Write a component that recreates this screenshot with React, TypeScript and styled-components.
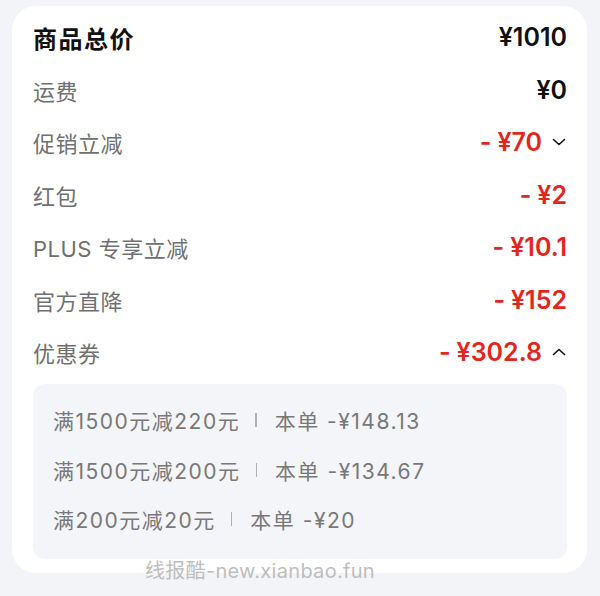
import styled, { createGlobalStyle } from 'styled-components';

const GlobalStyle = createGlobalStyle`
  html, body {
    margin: 0;
    padding: 0;
    background: #f3f4f8;
    font-family: Inter, "Noto Sans CJK SC", "Noto Sans", sans-serif;
  }
`;

const Page = styled.div`
  position: relative;
  width: 600px;
  height: 596px;
  padding: 6px 13px 0 12px;
  box-sizing: border-box;
`;

const Card = styled.div`
  background: #ffffff;
  border-radius: 24px;
  padding: 5px 20px 14px 21px;
  display: flex;
  flex-direction: column;
`;

const Row = styled.div`
  height: 52.5px;
  display: flex;
  align-items: center;
  justify-content: space-between;
`;

const Label = styled.div<{ $title?: boolean }>`
  font-size: ${({ $title }) => ($title ? '24px' : '22px')};
  font-weight: ${({ $title }) => ($title ? 700 : 400)};
  color: ${({ $title }) => ($title ? '#111111' : '#707070')};
  letter-spacing: ${({ $title }) => ($title ? '1.5px' : '0.5px')};
`;

const ValueWrap = styled.div`
  display: flex;
  align-items: center;
  gap: 9px;
`;

const Value = styled.div<{ $red?: boolean }>`
  font-size: 25px;
  font-weight: 600;
  color: ${({ $red }) => ($red ? '#e3261d' : '#111111')};
  display: flex;
  align-items: center;
`;

const Minus = styled.span`
  margin-right: 6px;
`;

const Chevron = styled.svg`
  width: 16px;
  height: 16px;
`;

const CouponBox = styled.div`
  margin-top: 5px;
  background: #f4f5f9;
  border-radius: 12px;
  padding: 12px 20px 15px 20px;
  display: flex;
  flex-direction: column;
`;

const CouponLine = styled.div`
  height: 49.5px;
  display: flex;
  align-items: center;
  font-size: 21px;
  letter-spacing: 1.5px;
  color: #787878;
`;

const Sep = styled.span`
  width: 1.5px;
  height: 14px;
  background: #b0b0b0;
  margin: 0 18px 0 15px;
`;

const Watermark = styled.div`
  position: absolute;
  left: 145px;
  top: 555px;
  font-size: 20px;
  color: #bdbdbd;
  letter-spacing: 0.3px;
`;

type Item = { label: string; value: string; red?: boolean; chevron?: 'down' | 'up' };

const items: Item[] = [
  { label: '运费', value: '¥0' },
  { label: '促销立减', value: '¥70', red: true, chevron: 'down' },
  { label: '红包', value: '¥2', red: true },
  { label: 'PLUS 专享立减', value: '¥10.1', red: true },
  { label: '官方直降', value: '¥152', red: true },
  { label: '优惠券', value: '¥302.8', red: true, chevron: 'up' },
];

const coupons = [
  { rule: '满1500元减220元', save: '本单 -¥148.13' },
  { rule: '满1500元减200元', save: '本单 -¥134.67' },
  { rule: '满200元减20元', save: '本单 -¥20' },
];

const ChevronIcon = ({ dir }: { dir: 'down' | 'up' }) => (
  <Chevron viewBox="0 0 16 16">
    <path
      d={dir === 'down' ? 'M2.5 5.5 L8 10.5 L13.5 5.5' : 'M2.5 10.5 L8 5.5 L13.5 10.5'}
      fill="none"
      stroke="#111"
      strokeWidth="1.6"
      strokeLinecap="round"
      strokeLinejoin="round"
    />
  </Chevron>
);

export default function App() {
  return (
    <>
      <GlobalStyle />
      <Page>
        <Card>
          <Row>
            <Label $title>商品总价</Label>
            <Value>¥1010</Value>
          </Row>
          {items.map((it) => (
            <Row key={it.label}>
              <Label>{it.label}</Label>
              <ValueWrap>
                <Value $red={it.red}>
                  {it.red && <Minus>-</Minus>}
                  {it.value}
                </Value>
                {it.chevron && <ChevronIcon dir={it.chevron} />}
              </ValueWrap>
            </Row>
          ))}
          <CouponBox>
            {coupons.map((c) => (
              <CouponLine key={c.rule}>
                {c.rule}
                <Sep />
                {c.save}
              </CouponLine>
            ))}
          </CouponBox>
        </Card>
        <Watermark>线报酷-new.xianbao.fun</Watermark>
      </Page>
    </>
  );
}
